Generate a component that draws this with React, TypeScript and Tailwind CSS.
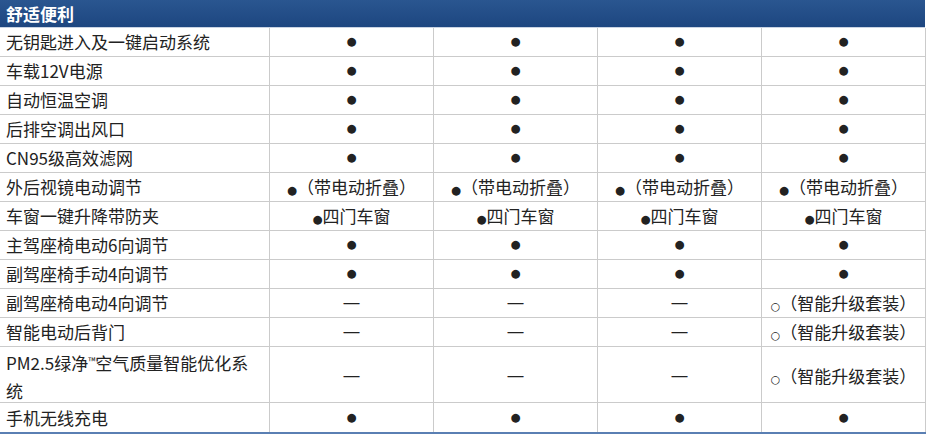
import React from 'react';

type Row = { name: React.ReactNode; cells: string[]; tall?: boolean };

const D = '●';
const N = '—';

const rows: Row[] = [
  { name: '无钥匙进入及一键启动系统', cells: [D, D, D, D] },
  { name: '车载12V电源', cells: [D, D, D, D] },
  { name: '自动恒温空调', cells: [D, D, D, D] },
  { name: '后排空调出风口', cells: [D, D, D, D] },
  { name: 'CN95级高效滤网', cells: [D, D, D, D] },
  { name: '外后视镜电动调节', cells: ['fold', 'fold', 'fold', 'fold'] },
  { name: '车窗一键升降带防夹', cells: ['door', 'door', 'door', 'door'] },
  { name: '主驾座椅电动6向调节', cells: [D, D, D, D] },
  { name: '副驾座椅手动4向调节', cells: [D, D, D, D] },
  { name: '副驾座椅电动4向调节', cells: [N, N, N, 'opt'] },
  { name: '智能电动后背门', cells: [N, N, N, 'opt'] },
  {
    name: (
      <>
        PM2.5绿净<span className="text-[10px] align-[5px]">™</span>空气质量智能优化系
        <br />统
      </>
    ),
    cells: [N, N, N, 'opt'],
    tall: true,
  },
  { name: '手机无线充电', cells: [D, D, D, D] },
];

function Dot() {
  return <span className="text-[11.5px] font-['DejaVu_Sans',sans-serif]">●</span>;
}

function Cell({ v }: { v: string }) {
  if (v === D) return <Dot />;
  if (v === N) return <span className="font-['Liberation_Sans',sans-serif] text-[16px]">—</span>;
  if (v === 'fold')
    return (
      <span>
        <Dot />（带电动折叠）
      </span>
    );
  if (v === 'door')
    return (
      <span>
        <Dot />四门车窗
      </span>
    );
  return (
    <span>
      <span className="text-[11px] font-['DejaVu_Sans',sans-serif]">○</span>（智能升级套装）
    </span>
  );
}

export default function App() {
  return (
    <div className="w-[928px] h-[434px] bg-white font-['Noto_Sans_CJK_SC',sans-serif] text-[17px] text-[#222] overflow-hidden">
      <div className="w-[926px] border-b-2 border-[#5a7fb3]">
        <div className="h-[28px] w-[925px] bg-gradient-to-b from-[#2a5690] to-[#1d4680] text-white font-bold flex items-center pl-[6px] border-b border-[#c9d3e3]">
          舒适便利
        </div>
        {rows.map((r, i) => (
          <div
            key={i}
            className={`grid grid-cols-[270px_164px_164px_164px_164px] ${r.tall ? 'h-[56px]' : 'h-[29px]'} ${
              i < rows.length - 1 ? 'border-b border-[#cbcbcb]' : ''
            }`}
          >
            <div className={`border-r border-[#cbcbcb] pl-[6px] flex items-center ${r.tall ? 'leading-[28px]' : ''}`}>
              <div>{r.name}</div>
            </div>
            {r.cells.map((c, j) => (
              <div key={j} className="border-r border-[#cbcbcb] flex items-center justify-center">
                <Cell v={c} />
              </div>
            ))}
          </div>
        ))}
      </div>
    </div>
  );
}
